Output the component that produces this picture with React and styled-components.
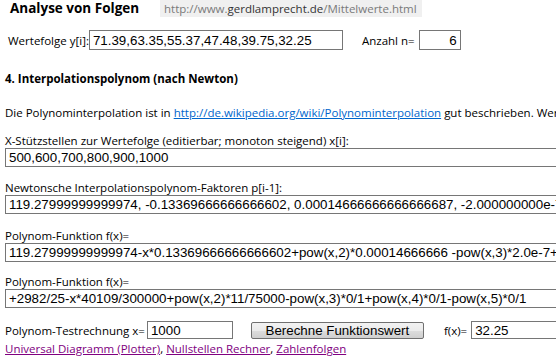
import styled, { createGlobalStyle } from "styled-components";

const GlobalStyle = createGlobalStyle`
  html, body {
    margin: 0;
    padding: 0;
    background: #ffffff;
    overflow: hidden;
  }
  body {
    font-family: "Open Sans", "Noto Sans", sans-serif;
    font-size: 11.5px;
    color: #000;
  }
`;

const Page = styled.div`
  width: 556px;
  height: 361px;
  overflow: hidden;
  padding: 0 0 0 5px;
  box-sizing: border-box;
`;

const Header = styled.div`
  display: flex;
  align-items: center;
  height: 17px;
`;

const Title = styled.h1`
  margin: 0 0 0 5px;
  width: 150px;
  font-size: 13.5px;
  font-weight: 700;
  line-height: 17px;
`;

const UrlBox = styled.div`
  background: #f0f0f0;
  height: 17px;
  line-height: 17px;
  padding: 0 5px 0 4px;
  font-size: 11.5px;
  color: #7a7a7a;
`;

const Host = styled.span`
  color: #333;
`;

const Row = styled.div`
  display: flex;
  align-items: center;
  margin-top: ${(p) => p.$top || 0}px;
`;

const Label = styled.span`
  white-space: nowrap;
  margin-left: ${(p) => p.$left || 0}px;
  margin-right: ${(p) => p.$right || 0}px;
`;

const Field = styled.input`
  box-sizing: border-box;
  height: ${(p) => p.$h || 19}px;
  width: ${(p) => p.$w}px;
  border: 1px solid #767676;
  padding: 0 3px;
  margin: 0;
  font-family: "Liberation Sans", Arial, sans-serif;
  font-size: 13.33px;
  color: #000;
  text-align: ${(p) => p.$align || "left"};
  outline: none;
  flex: none;
`;

const Heading = styled.h2`
  margin: 21px 0 0 0;
  font-size: 11.5px;
  font-weight: 700;
  line-height: 16px;
`;

const Para = styled.p`
  margin: 18px 0 0 0;
  white-space: nowrap;
  line-height: 16px;
`;

const Link = styled.a`
  color: ${(p) => (p.$visited ? "#800080" : "#0066cc")};
  text-decoration: underline;
`;

const Block = styled.div`
  margin-top: ${(p) => p.$top}px;
  display: flex;
  flex-direction: column;
  align-items: flex-start;
`;

const BlockLabel = styled.div`
  line-height: 15px;
  white-space: nowrap;
`;

const Button = styled.button`
  box-sizing: border-box;
  height: 17px;
  width: 173px;
  padding: 0;
  border: 1px solid #707070;
  border-radius: 2px;
  background: linear-gradient(#f2f2f2 0%, #ebebeb 50%, #dddddd 51%, #cfcfcf 100%);
  font-family: "Liberation Sans", Arial, sans-serif;
  font-size: 13.33px;
  line-height: 15px;
  color: #000;
  flex: none;
`;

const Links = styled.div`
  margin-top: 2px;
  line-height: 16px;
  white-space: nowrap;
`;

const App = () => {
  return (
    <>
      <GlobalStyle />
      <Page>
        <Header>
          <Title>Analyse von Folgen</Title>
          <UrlBox>
            http://www.<Host>gerdlamprecht.de</Host>/Mittelwerte.html
          </UrlBox>
        </Header>

        <Row $top={13}>
          <Label $left={3}>Wertefolge y[i]:</Label>
          <Field
            $w={254}
            $h={20}
            readOnly
            defaultValue="71.39,63.35,55.37,47.48,39.75,32.25"
          />
          <Label $left={19} $right={4}>Anzahl n=</Label>
          <Field $w={42} $h={20} $align="right" readOnly defaultValue="6" />
        </Row>

        <Heading>4. Interpolationspolynom (nach Newton)</Heading>

        <Para>
          Die Polynominterpolation ist in{" "}
          <Link href="#">http://de.wikipedia.org/wiki/Polynominterpolation</Link>{" "}
          gut beschrieben. Werte
        </Para>

        <Block $top={12}>
          <BlockLabel>X-Stützstellen zur Wertefolge (editierbar; monoton steigend) x[i]:</BlockLabel>
          <Field $w={600} readOnly defaultValue="500,600,700,800,900,1000" />
        </Block>

        <Block $top={13}>
          <BlockLabel>Newtonsche Interpolationspolynom-Faktoren p[i-1]:</BlockLabel>
          <Field
            $w={600}
            readOnly
            defaultValue="119.27999999999974, -0.13369666666666602, 0.00014666666666666687, -2.000000000e-7"
          />
        </Block>

        <Block $top={14}>
          <BlockLabel>Polynom-Funktion f(x)=</BlockLabel>
          <Field
            $w={600}
            readOnly
            defaultValue="119.27999999999974-x*0.13369666666666602+pow(x,2)*0.00014666666 -pow(x,3)*2.0e-7+pow(x,4)*0"
          />
        </Block>

        <Block $top={12}>
          <BlockLabel>Polynom-Funktion f(x)=</BlockLabel>
          <Field
            $w={600}
            readOnly
            defaultValue="+2982/25-x*40109/300000+pow(x,2)*11/75000-pow(x,3)*0/1+pow(x,4)*0/1-pow(x,5)*0/1"
          />
        </Block>

        <Row $top={13}>
          <Label $right={2}>Polynom-Testrechnung x=</Label>
          <Field $w={86} $h={18} readOnly defaultValue="1000" />
          <Label $left={18} />
          <Button>Berechne Funktionswert</Button>
          <Label $left={20} $right={4}>f(x)=</Label>
          <Field $w={120} $h={18} readOnly defaultValue="32.25" />
        </Row>

        <Links>
          <Link href="#" $visited>Universal Diagramm (Plotter)</Link>,{" "}
          <Link href="#" $visited>Nullstellen Rechner</Link>,{" "}
          <Link href="#" $visited>Zahlenfolgen</Link>
        </Links>
      </Page>
    </>
  );
};

export default App;
